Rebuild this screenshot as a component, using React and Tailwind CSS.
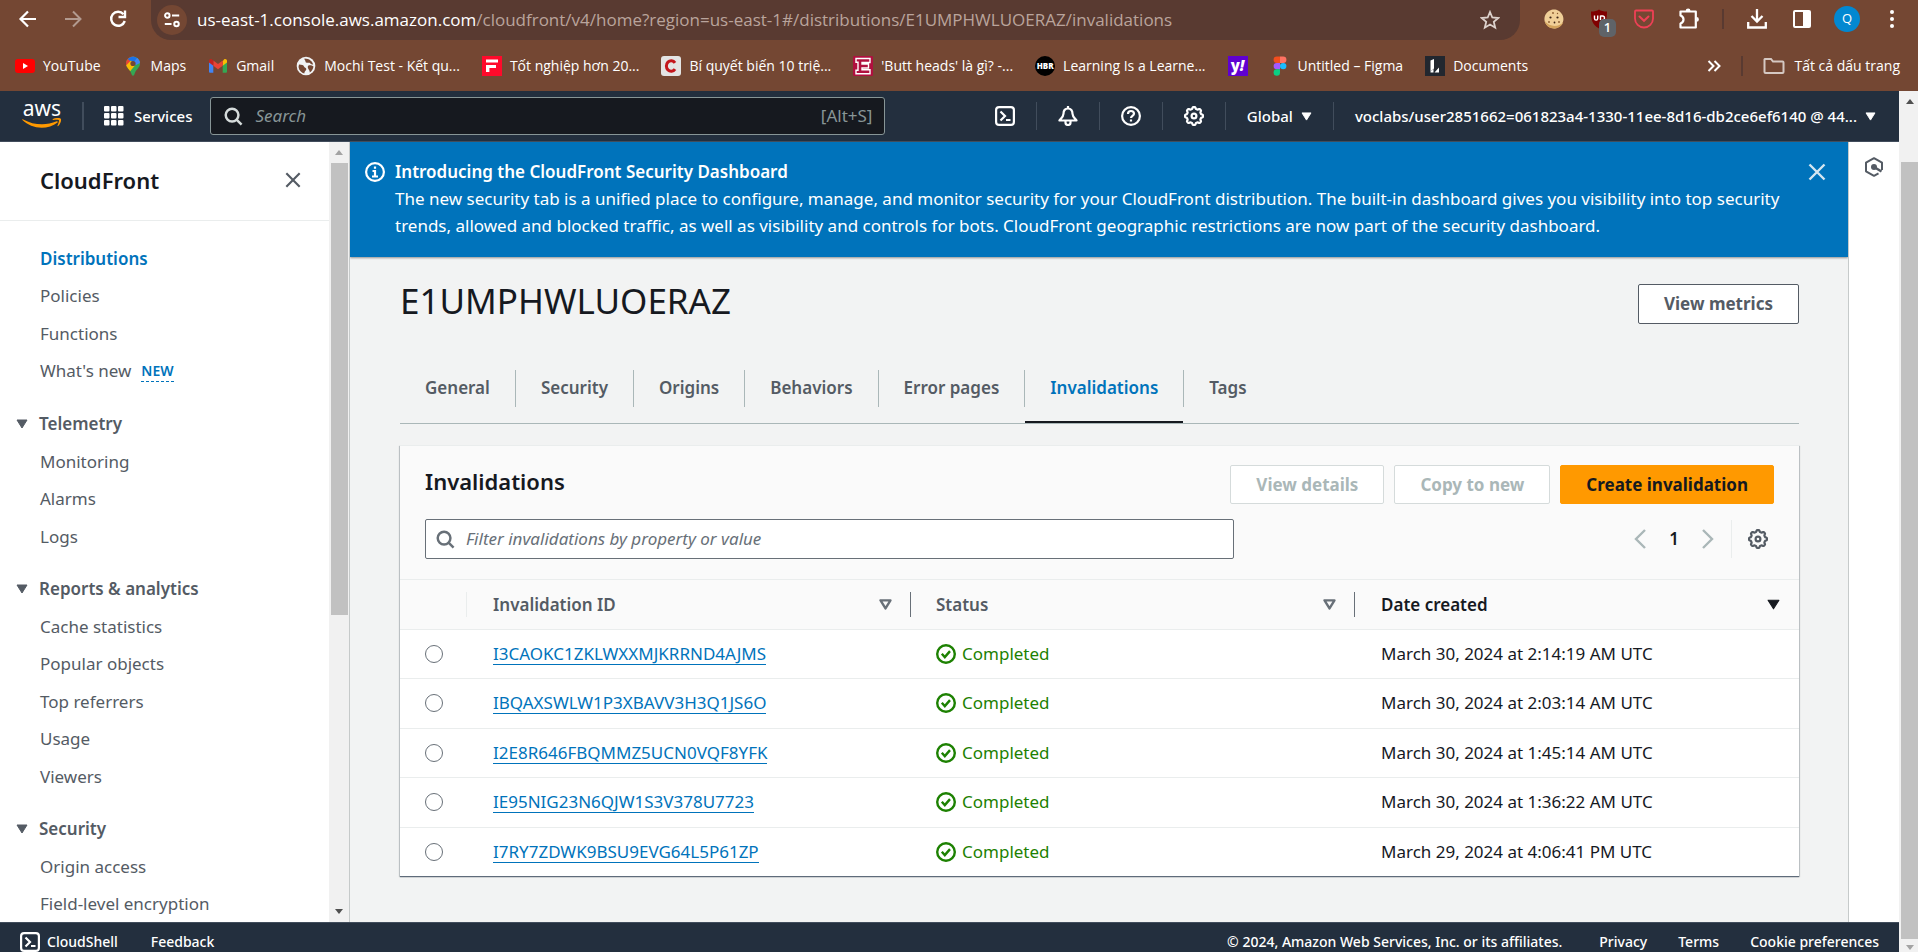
import React from "react";

const ember = "font-['Noto_Sans','Open_Sans',sans-serif]";
const segoe = "font-['Open_Sans','Noto_Sans',sans-serif]";

/* ---------- drawings ---------- */

function gearPath(cx, cy, r, depth, teeth) {
  const pts = [];
  for (let i = 0; i <= 160; i++) {
    const a = (i / 160) * Math.PI * 2;
    const wave = Math.tanh(2.2 * Math.cos(teeth * a));
    const rr = r + depth * wave;
    pts.push(`${(cx + rr * Math.cos(a)).toFixed(2)} ${(cy + rr * Math.sin(a)).toFixed(2)}`);
  }
  return `M${pts.join("L")}Z`;
}

const Gear = ({ className }) => (
  <svg viewBox="0 0 20 20" className={className} fill="none" stroke="currentColor" strokeWidth="2.200" strokeLinejoin="round" aria-hidden="true">
    <path d={gearPath(10, 10, 8.1, 0.9, 8)} />
    <circle cx="10" cy="10" r="2.4" />
  </svg>
);

const Terminal = ({ className }) => (
  <svg viewBox="0 0 20 20" className={className} fill="none" stroke="currentColor" strokeWidth="2.200" aria-hidden="true">
    <rect x="1.100" y="1.100" width="17.800" height="17.800" rx="3" />
    <path d="M5.500 5.500 10 10l-4.500 4.500M11 14h4.500" />
  </svg>
);

const Bell = () => (
  <svg viewBox="0 0 20 20" className="size-5" fill="none" stroke="currentColor" strokeWidth="2.200" strokeLinejoin="round" aria-hidden="true">
    <path d="M10 0v3M10 2.500c-3 0-4.500 2.300-4.500 5.200C5.500 10.500 3 12.500 1.500 14.500h17C17 12.500 14.500 10.500 14.500 7.700c0-2.900-1.500-5.200-4.500-5.200Z" />
    <path d="M7.500 15v1.500a2.500 2.500 0 0 0 5 0V15" />
  </svg>
);

const Help = () => (
  <svg viewBox="0 0 20 20" className="size-5" fill="none" stroke="currentColor" strokeWidth="2.200" aria-hidden="true">
    <circle cx="10" cy="10" r="8.900" />
    <path d="M7 8c0-1.900 1.300-3 3-3s3 1.100 3 2.700c0 2.100-3 2.300-3 4.300" />
    <path d="M10 13.500v2" />
  </svg>
);

const Info = () => (
  <svg viewBox="0 0 20 20" className="size-5" fill="none" stroke="currentColor" strokeWidth="2.200" aria-hidden="true">
    <circle cx="10" cy="10" r="8.900" />
    <path d="M10 4.500v2.200M7.500 9H10v5M7 14.500h6" />
  </svg>
);

const Magnifier = ({ className }) => (
  <svg viewBox="0 0 20 20" className={className} fill="none" stroke="currentColor" strokeWidth="2.600" aria-hidden="true">
    <circle cx="8.500" cy="8.500" r="6.700" />
    <path d="m13.200 13.200 5.300 5.300" />
  </svg>
);

const Cross = ({ className }) => (
  <svg viewBox="0 0 18 18" className={className} fill="none" stroke="currentColor" strokeWidth="2.400" aria-hidden="true">
    <path d="m1.500 1.500 15 15M16.500 1.500l-15 15" />
  </svg>
);

const Caret = ({ className }) => (
  <svg viewBox="0 0 12 10" className={className} fill="currentColor" stroke="currentColor" strokeLinejoin="round" aria-hidden="true">
    <path d="M1 1h10L6 9Z" />
  </svg>
);

const HollowCaret = () => (
  <svg viewBox="0 0 12 10" className="h-[11px] w-[13px] text-[#687078]" fill="none" stroke="currentColor" strokeWidth="2.200" strokeLinejoin="round" aria-hidden="true">
    <path d="M1.400 1.200h9.200L6 8.600Z" />
  </svg>
);

const Check = () => (
  <svg viewBox="0 0 20 20" className="size-5" fill="none" stroke="#1d8102" strokeWidth="2.400" aria-hidden="true">
    <circle cx="10" cy="10" r="8.800" />
    <path d="m5.800 9.800 3 3.300 5.200-6" />
  </svg>
);

const AwsLogo = () => (
  <span className="flex w-10 flex-col items-center">
    <span className="h-[15px] text-[21px] leading-[10px] font-normal text-white">aws</span>
    <svg viewBox="0 0 40 11" className="h-[11px] w-10" fill="#ff9900" aria-hidden="true">
      <path d="M.4 2.100c-.4-.6.1-1.100.8-.7C7 4.600 13.500 6.300 20 6.300c5 0 10-1.100 14.700-3 .9-.4 1.600.6.8 1.200C31.300 7.900 25.200 9.800 19.700 9.800 12.400 9.800 5.500 7 .4 2.100Z" />
      <path d="M31 2c-.5 0-.6-.6-.1-.9C33.600-.5 38-.2 38.800.8c.9 1.200-.4 5.200-2.600 7.200-.5.400-.9.100-.700-.400.700-1.700 1.900-4.700 1.300-5.500C36.200 1.300 33 1.700 31 2Z" />
    </svg>
  </span>
);

const Hexagon = () => (
  <svg viewBox="0 0 20 20" className="size-5 text-[#545b64]" fill="none" stroke="currentColor" strokeWidth="2" strokeLinejoin="round" aria-hidden="true">
    <path d="M18 13V5.700L10 1.200 2 5.700v8.600l8 4.500 4.500-2.500" />
    <path d="m10 10 7.500 4.500" strokeWidth="2.600" />
    <circle cx="10" cy="10" r="3" fill="currentColor" stroke="none" />
  </svg>
);

/* ---------- browser frame ---------- */

const bookmarks = [
  {
    text: "YouTube",
    icon: (
      <svg viewBox="0 0 20 20" className="size-5">
        <rect y="3" width="20" height="14" rx="3" fill="#ff0000" />
        <path d="m8 7 5 3-5 3Z" fill="#fff" />
      </svg>
    ),
  },
  {
    text: "Maps",
    icon: (
      <svg viewBox="0 0 20 20" className="size-5">
        <defs>
          <clipPath id="pin">
            <path d="M10 0.500a7 7 0 0 1 7 7c0 4-3.700 5.800-5.200 9.700-.5 1.300-.8 2.500-1.800 2.500s-1.300-1.200-1.800-2.500C6.700 13.300 3 11.500 3 7.500a7 7 0 0 1 7-7Z" />
          </clipPath>
        </defs>
        <g clipPath="url(#pin)">
          <rect width="20" height="20" fill="#34a853" />
          <path d="M0 0h12L3 11H0Z" fill="#ea4335" />
          <path d="M4.500 2.800 10 7.500 14.500 2 10 0Z" fill="#1a73e8" />
          <path d="m14.500 1.500-5 6L13 9l6-3Z" fill="#4285f4" />
          <path d="m2 10.500 6-6 4 5-6 7Z" fill="#fbbc04" />
        </g>
        <circle cx="10" cy="7.500" r="2.600" fill="#744733" />
      </svg>
    ),
  },
  {
    text: "Gmail",
    icon: (
      <svg viewBox="0 0 20 20" className="size-5">
        <path d="M1 5v10.500c0 .8.500 1.300 1.300 1.300h3V8Z" fill="#4285f4" />
        <path d="M19 5v10.500c0 .8-.5 1.300-1.300 1.300h-3V8Z" fill="#34a853" />
        <path d="M14.700 5.200V9.700L19 6.500V5c0-1.600-1.700-2.400-3-1.500Z" fill="#fbbc04" />
        <path d="M5.300 9.700V4.500L10 8l4.700-3.500v5.200L10 13.200Z" fill="#ea4335" />
        <path d="M1 5v1.500l4.300 3.200V4.500L4 3.500C2.700 2.600 1 3.400 1 5Z" fill="#c5221f" />
      </svg>
    ),
  },
  {
    text: "Mochi Test - Kết qu...",
    icon: (
      <svg viewBox="0 0 20 20" className="size-5">
        <circle cx="10" cy="10" r="9.300" fill="#f1f3f4" />
        <path d="M3 8.500c3 .2 4.500.5 5 2 .4 1.300 2.300 1 2.300 2.500 0 1.700-1.600 1.500-2 4.500C5.500 16.900 3 14.500 2.500 11ZM8.500 2.500c-.4 1.700 1 1.500 1 3 0 1.600 2.200 1.200 3.500 1.200 1.500 0 1.300 1.800 4.200 1.800-.7-3-3.700-6-8.700-6ZM12.500 9.500c1.500-.8 3.500-.2 5 1-.3 2.500-1.800 4.800-3.800 6 .1-1.800-.6-2.300-1.400-3.700-.6-1.100-.8-2.700.2-3.300Z" fill="#744733" />
      </svg>
    ),
  },
  {
    text: "Tốt nghiệp hơn 20...",
    icon: (
      <svg viewBox="0 0 20 20" className="size-5">
        <rect width="20" height="20" fill="#ff0a2b" />
        <path d="M4 5h12M4 10.500h10" stroke="#fff" strokeWidth="3" />
        <path d="M5.700 9v7" stroke="#fff" strokeWidth="3.400" />
      </svg>
    ),
  },
  {
    text: "Bí quyết biến 10 triệ...",
    icon: (
      <svg viewBox="0 0 20 20" className="size-5">
        <rect width="20" height="20" rx="3" fill="#e4e4e4" />
        <path d="M14 6.800A4.800 5.300 0 1 0 14 13.200" fill="none" stroke="#c4161c" strokeWidth="3" />
      </svg>
    ),
  },
  {
    text: "'Butt heads' là gì? -...",
    icon: (
      <svg viewBox="0 0 20 20" className="size-5">
        <rect width="20" height="20" rx="1" fill="#b0103f" />
        <path d="M3 2.500h14v4H9V8h6.500v4H9v1.700h8v4H3v-3.500h2v-8H3Z" fill="none" stroke="#fff" strokeWidth="1.400" />
      </svg>
    ),
  },
  {
    text: "Learning Is a Learne...",
    icon: (
      <span className="flex size-5 items-center justify-center rounded-full bg-black text-[8px] leading-none font-extrabold text-white">HBR</span>
    ),
  },
  {
    text: "",
    label: "Yahoo",
    icon: (
      <span className="flex size-5 items-center justify-center bg-[#5f01d1] text-[15px] leading-none font-extrabold text-white">
        y<span className="italic">!</span>
      </span>
    ),
  },
  {
    text: "Untitled – Figma",
    icon: (
      <svg viewBox="0 0 20 20" className="size-5">
        <path d="M10 .5H6.800a3.200 3.200 0 0 0 0 6.400H10Z" fill="#f24e1e" />
        <path d="M10 .5h3.200a3.200 3.200 0 0 1 0 6.400H10Z" fill="#ff7262" />
        <path d="M10 6.900H6.800a3.200 3.200 0 0 0 0 6.400H10Z" fill="#a259ff" />
        <circle cx="13.200" cy="10.100" r="3.200" fill="#1abcfe" />
        <path d="M10 13.300H6.800a3.200 3.200 0 1 0 3.200 3.200Z" fill="#0acf83" />
      </svg>
    ),
  },
  {
    text: "Documents",
    icon: (
      <svg viewBox="0 0 20 20" className="size-5">
        <rect width="20" height="20" fill="#22272f" />
        <path d="M5.500 4.500 9 3v9.500l-3.500 3ZM9.500 16.500l4.500-5v5Z" fill="#fff" />
        <path d="M5.500 16.500v-1l3-2.500v3.500Z" fill="#fff" />
      </svg>
    ),
  },
];

const chromeIcon = "flex size-[30px] shrink-0 items-center justify-center text-white";

function BrowserBar() {
  return (
    <header className={`h-[91px] shrink-0 bg-[#744733] text-white ${segoe}`}>
      <div className="flex h-10 items-start pr-[11px] pl-[13px]">
        <div className="flex h-[38px] items-center gap-[15px]">
          <button aria-label="Back" className={chromeIcon}>
            <svg viewBox="0 0 20 20" className="size-5" fill="none" stroke="currentColor" strokeWidth="2.200"><path d="M18 10H3M10 2.500 2.500 10l7.500 7.500" /></svg>
          </button>
          <button aria-label="Forward" className={`${chromeIcon} opacity-45`}>
            <svg viewBox="0 0 20 20" className="size-5" fill="none" stroke="currentColor" strokeWidth="2"><path d="M2 10h15M10 2.500l7.500 7.500-7.500 7.500" /></svg>
          </button>
          <button aria-label="Reload" className={chromeIcon}>
            <svg viewBox="0 0 20 20" className="size-5" fill="none" stroke="currentColor" strokeWidth="2.400"><path d="M16.800 12A7 7 0 1 1 15.500 5.200" /><path d="M17 1.500V8h-6.500" /></svg>
          </button>
        </div>
        <div className="ml-[18px] flex h-10 min-w-0 flex-1 items-center rounded-b-[20px] bg-[#593a31] pr-4 pl-[6px]">
          <button aria-label="Site information" className="flex size-[30px] shrink-0 items-center justify-center rounded-full bg-[#744733]">
            <svg viewBox="0 0 20 20" className="size-[18px]" fill="none" stroke="currentColor" strokeWidth="2.200"><circle cx="4.800" cy="5" r="2.500" /><path d="M10 5h8M2 14.500h7.500" /><circle cx="15" cy="14.500" r="2.500" /></svg>
          </button>
          <div
            role="textbox"
            aria-label="Address"
            contentEditable
            suppressContentEditableWarning
            className="ml-[10px] flex-1 truncate text-[17px] leading-6 text-[#b9a49c] outline-none"
          >
            <span className="text-white">us-east-1.console.aws.amazon.com</span>/cloudfront/v4/home?region=us-east-1#/distributions/E1UMPHWLUOERAZ/invalidations
          </div>
          <button aria-label="Bookmark this page" className="flex size-7 items-center justify-center">
            <svg viewBox="0 0 20 20" className="size-5" fill="none" stroke="#ddd2cd" strokeWidth="1.800"><path d="m10 2 2.300 5.500 6 .5-4.500 3.900 1.400 5.800L10 14.600l-5.200 3.100 1.400-5.800L1.700 8l6-.5Z" /></svg>
          </button>
        </div>
        <div className="ml-[19px] flex h-[38px] items-center gap-[15px]">
          <button aria-label="Cookie editor" className={chromeIcon}>
            <svg viewBox="0 0 20 20" className="size-5">
              <path d="M10 .5c2 0 3 .5 4.500 1.300s3.400 2.700 4.100 4.500c.5 1.400 1 3.100.8 4.600-.3 2-1.400 4.500-2.800 5.900s-3.900 2.600-5.900 2.700c-2 .1-4.500-.5-6.100-1.700S1.200 14.500.7 12.500C.2 10.300.4 7.800 1.300 6s2.500-3.200 4.100-4.200S8.300.5 10 .5Z" fill="#f0cf98" />
              <path d="M.8 12c.8 4.400 4.500 7.500 9.200 7.500 4.400 0 8.100-2.700 9.200-6.600-2 2.900-5.200 4-8.700 4S3 15.200.8 12Z" fill="#d3a35c" />
              <g fill="#3d2416"><circle cx="6.500" cy="8.500" r="1.100" /><circle cx="13.500" cy="8.500" r="1.100" /><circle cx="10.500" cy="13.500" r=".9" /></g>
              <g fill="#8a5a2e"><circle cx="9" cy="4" r=".9" /><circle cx="15" cy="13" r=".9" /><circle cx="5" cy="13" r=".9" /><circle cx="13.500" cy="4.500" r=".7" /></g>
            </svg>
          </button>
          <button aria-label="Ad blocker, 1 blocked" className={`relative ${chromeIcon}`}>
            <svg viewBox="0 0 20 20" className="size-5"><path d="M10 0.500c2 1.500 4.500 2 8 2 0 8-1 13-8 17-7-4-8-9-8-17 3.500 0 6-.5 8-2Z" fill="#800000" /><path d="M5.500 6.500v3a1.600 1.600 0 0 0 3.200 0v-3M11.500 6.500v4.500M11.500 7h2a1.800 1.800 0 0 1 0 4" fill="none" stroke="#fff" strokeWidth="1.400" /></svg>
            <span className="absolute top-[15px] left-[15px] flex h-[18px] w-[17px] items-center justify-center rounded-[5px] bg-[#5f6368] text-[13px] font-semibold">1</span>
          </button>
          <button aria-label="Save to Pocket" className={chromeIcon}>
            <svg viewBox="0 0 20 20" className="size-5" fill="none" stroke="#ef4056" strokeWidth="1.800"><path d="M2 1.500h16c.6 0 1 .4 1 1V9.500a9 9 0 0 1-18 0V2.500c0-.6.4-1 1-1Z" /><path d="m5.500 7.500 4.500 4.300 4.500-4.300" strokeWidth="2" strokeLinecap="round" /></svg>
          </button>
          <button aria-label="Extensions" className={chromeIcon}>
            <svg viewBox="0 0 22 22" className="size-[22px]" fill="none" stroke="currentColor" strokeWidth="2.200" strokeLinejoin="round">
              <path d="M2.500 3.500h15.300v16H2.500v-4c1.900-.7 3-2.100 3-4s-1.100-3.300-3-4Z" />
              <path d="M7.700 3a2.400 2.400 0 0 1 4.800 0ZM18.500 9a2.400 2.400 0 0 1 0 4.800Z" fill="currentColor" stroke="none" />
            </svg>
          </button>
          <span className="mx-[3px] h-5 w-[2px] bg-[#593a31]" />
          <button aria-label="Downloads" className={chromeIcon}>
            <svg viewBox="0 0 20 20" className="size-5" fill="none" stroke="currentColor" strokeWidth="2.300"><path d="M10 0v12.500M4.500 7l5.500 5.500L15.500 7M1.200 13v5.500h17.600V13" /></svg>
          </button>
          <button aria-label="Side panel" className={chromeIcon}>
            <svg viewBox="0 0 20 20" className="size-5"><rect x="2" y="2" width="16" height="16" rx="1" fill="none" stroke="#fff" strokeWidth="2" /><path d="M11 2h7v16h-7Z" fill="#fff" /></svg>
          </button>
          <button aria-label="Profile" className="mx-[2px] flex size-[26px] items-center justify-center rounded-full bg-[#0288d1] text-[13px]">Q</button>
          <button aria-label="Browser menu" className={chromeIcon}>
            <svg viewBox="0 0 20 20" className="size-5" fill="currentColor"><circle cx="10" cy="3" r="2" /><circle cx="10" cy="10" r="2" /><circle cx="10" cy="17" r="2" /></svg>
          </button>
        </div>
      </div>
      <nav aria-label="Bookmarks" className="flex h-[51px] items-center pr-[18px] pl-[15px] text-sm">
        <ul className="flex min-w-0 flex-1 items-center gap-[22px]">
          {bookmarks.map((b) => (
            <li key={b.text || b.label}>
              <a href="#" aria-label={b.text || b.label} className="flex items-center gap-2 whitespace-nowrap">
                {b.icon}
                {b.text && <span>{b.text}</span>}
              </a>
            </li>
          ))}
        </ul>
        <button aria-label="More bookmarks">
          <svg viewBox="0 0 14 12" className="h-3 w-[14px]" fill="none" stroke="currentColor" strokeWidth="2"><path d="m1.500 1 5 5-5 5M7.500 1l5 5-5 5" /></svg>
        </button>
        <span className="mx-5 h-5 w-[2px] bg-[#593a31]" />
        <a href="#" className="flex items-center gap-[10px] whitespace-nowrap">
          <svg viewBox="0 0 22 18" className="h-[18px] w-[22px]" fill="none" stroke="#d5c8c2" strokeWidth="2"><path d="M2 2h6l2 2.500h9.500c.6 0 1 .4 1 1V15c0 .6-.4 1-1 1h-17c-.6 0-1-.4-1-1V2.500Z" /></svg>
          <span>Tất cả dấu trang</span>
        </a>
      </nav>
    </header>
  );
}

/* ---------- console ---------- */

const Divider = () => <span className="mx-[21px] h-7 w-px shrink-0 bg-[#414d5c]" />;

function TopNav() {
  return (
    <nav aria-label="Console" className="flex h-[51px] shrink-0 items-center border-b border-[#414d5c] bg-[#232f3e] text-[15px] font-medium text-white">
      <a href="#" aria-label="AWS home" className="ml-[22px]"><AwsLogo /></a>
      <span className="ml-5 h-7 w-[2px] bg-[#414d5c]" />
      <button className="ml-5 flex items-center gap-[10px]">
        <svg viewBox="0 0 20 20" className="size-5" fill="currentColor" aria-hidden="true">
          {[0, 7, 14].map((y) => [0, 7, 14].map((x) => <rect key={`${x}-${y}`} x={x} y={y} width="5.500" height="5.500" rx="1" />))}
        </svg>
        Services
      </button>
      <label className="ml-[18px] flex h-[38px] w-[675px] shrink items-center rounded-[3px] border border-[#879596] bg-[#16191f] pr-3 pl-[13px] text-[17px] font-normal">
        <Magnifier className="size-[19px] text-[#d5dbdb]" />
        <input aria-label="Search" placeholder="Search" className="ml-3 min-w-0 flex-1 bg-transparent italic outline-none placeholder:text-[#879596]" />
        <span className="text-[#879596]">[Alt+S]</span>
      </label>
      <div className="flex flex-1 items-center justify-end pr-[23px]">
        <button aria-label="CloudShell"><Terminal className="size-5" /></button>
        <Divider />
        <button aria-label="Notifications"><Bell /></button>
        <Divider />
        <button aria-label="Help"><Help /></button>
        <Divider />
        <button aria-label="Settings"><Gear className="size-5" /></button>
        <Divider />
        <button className="flex items-center gap-2">Global <Caret className="h-[9px] w-[11px]" /></button>
        <Divider />
        <button className="flex items-center gap-2 whitespace-nowrap">
          voclabs/user2851662=061823a4-1330-11ee-8d16-db2ce6ef6140 @ 44... <Caret className="h-[9px] w-[11px]" />
        </button>
      </div>
    </nav>
  );
}

const sections = [
  { title: "Telemetry", items: ["Monitoring", "Alarms", "Logs"] },
  { title: "Reports & analytics", items: ["Cache statistics", "Popular objects", "Top referrers", "Usage", "Viewers"] },
  { title: "Security", items: ["Origin access", "Field-level encryption"] },
];

const linkRow = "flex items-center odd:h-[37px] even:h-[38px]";

function Sidebar() {
  return (
    <aside className="flex w-[350px] shrink-0 border-r border-[#c6caca] bg-white text-[#545b64]">
      <div className="flex-1 overflow-hidden">
        <div className="flex h-[79px] items-center justify-between border-b border-[#eaeded] pr-7 pb-[2px] pl-10">
          <h2 className="text-[22px] font-semibold text-[#16191f]">CloudFront</h2>
          <button aria-label="Close navigation"><Cross className="size-4" /></button>
        </div>
        <ul className="pt-[19px] pl-10">
          <li className={linkRow}><a href="#" className="font-semibold text-[#0073bb]">Distributions</a></li>
          <li className={linkRow}><a href="#">Policies</a></li>
          <li className={linkRow}><a href="#">Functions</a></li>
          <li className={linkRow}>
            <a href="#">What's new</a>
            <button className="ml-[10px] border-b border-dashed border-[#0073bb] text-sm leading-5 font-semibold text-[#0073bb]">NEW</button>
          </li>
        </ul>
        {sections.map((s) => (
          <section key={s.title} className="mt-[15px]">
            <h3 className="font-semibold">
              <button className="flex h-[38px] items-center gap-[11px] pl-4">
                <Caret className="h-[10px] w-3" />
                {s.title}
              </button>
            </h3>
            <ul className="pl-10">
              {s.items.map((t) => (
                <li key={t} className={linkRow}><a href="#">{t}</a></li>
              ))}
            </ul>
          </section>
        ))}
      </div>
      <div className="flex w-5 shrink-0 flex-col items-center bg-[#f1f1f1]" aria-hidden="true">
        <span className="flex h-[21px] items-center"><svg viewBox="0 0 8 5" className="h-[5px] w-2"><path d="M4 0l4 5H0Z" fill="#a3a3a3" /></svg></span>
        <span className="w-[17px] flex-[452] bg-[#c1c1c1]" />
        <span className="flex-[286]" />
        <span className="flex h-[21px] items-center"><svg viewBox="0 0 8 5" className="h-[5px] w-2"><path d="M0 0h8L4 5Z" fill="#505050" /></svg></span>
      </div>
    </aside>
  );
}

const tabs = ["General", "Security", "Origins", "Behaviors", "Error pages", "Invalidations", "Tags"];

const rows = [
  ["I3CAOKC1ZKLWXXMJKRRND4AJMS", "March 30, 2024 at 2:14:19 AM UTC"],
  ["IBQAXSWLW1P3XBAVV3H3Q1JS6O", "March 30, 2024 at 2:03:14 AM UTC"],
  ["I2E8R646FBQMMZ5UCN0VQF8YFK", "March 30, 2024 at 1:45:14 AM UTC"],
  ["IE95NIG23N6QJW1S3V378U7723", "March 30, 2024 at 1:36:22 AM UTC"],
  ["I7RY7ZDWK9BSU9EVG64L5P61ZP", "March 29, 2024 at 4:06:41 PM UTC"],
];

function Banner() {
  return (
    <div role="status" className="flex h-[115px] items-start bg-[#0073bb] pt-4 pr-[22px] pl-[15px] text-white shadow-[0_1px_2px_#00000066]">
      <span className="mt-1"><Info /></span>
      <div className="ml-[10px] min-w-0 flex-1 pr-2 leading-[27px]">
        <p className="font-semibold">Introducing the CloudFront Security Dashboard</p>
        <p>
          The new security tab is a unified place to configure, manage, and monitor security for your CloudFront distribution. The built-in dashboard gives you visibility into top security trends, allowed and blocked traffic, as well as visibility and controls for bots. CloudFront geographic restrictions are now part of the security dashboard.
        </p>
      </div>
      <button aria-label="Dismiss" className="mt-[5px] text-[#d5e6f1]"><Cross className="size-[18px]" /></button>
    </div>
  );
}

const btn = "flex items-center justify-center rounded-[2px] border px-[25px] font-bold whitespace-nowrap";

function InvalidationsCard() {
  return (
    <section className="mt-[21px] border-t border-[#eaeded] bg-white shadow-[0_1px_1px_0_#5f6b7a,1px_1px_1px_0_#001c2426,-1px_1px_1px_0_#001c2426]">
      <div className="border-b border-[#eaeded] bg-[#fafafa] px-[25px] pt-[19px] pb-5">
        <div className="flex items-start justify-between">
          <h2 className="mt-[2px] text-[22px] leading-7 font-semibold text-[#16191f]">Invalidations</h2>
          <div className="flex gap-[10px]">
            <button disabled className={`${btn} h-[39px] border-[#d5dbdb] bg-white text-[#aab7b8]`}>View details</button>
            <button disabled className={`${btn} h-[39px] border-[#d5dbdb] bg-white text-[#aab7b8]`}>Copy to new</button>
            <button className={`${btn} h-[39px] border-[#ff9900] bg-[#ff9900] text-[#16191f]`}>Create invalidation</button>
          </div>
        </div>
        <div className="mt-[15px] flex items-center justify-between">
          <label className="flex h-10 w-3/5 items-center rounded-[2px] border border-[#687078] bg-white pl-[10px]">
            <Magnifier className="size-[19px] text-[#687078]" />
            <input aria-label="Filter invalidations" placeholder="Filter invalidations by property or value" className="ml-[11px] min-w-0 flex-1 bg-transparent italic outline-none placeholder:text-[#687078]" />
          </label>
          <div className="flex items-center">
            <button aria-label="Previous page" className="text-[#aab7b8]">
              <svg viewBox="0 0 12 20" className="h-5 w-3" fill="none" stroke="currentColor" strokeWidth="2.400"><path d="M11 1 2 10l9 9" /></svg>
            </button>
            <button className="w-14 text-center font-semibold text-[#16191f]">1</button>
            <button aria-label="Next page" className="text-[#aab7b8]">
              <svg viewBox="0 0 12 20" className="h-5 w-3" fill="none" stroke="currentColor" strokeWidth="2.400"><path d="m1 1 9 9-9 9" /></svg>
            </button>
            <span className="mr-4 ml-[17px] h-[38px] w-px bg-[#eaeded]" />
            <button aria-label="Table preferences" className="mr-[6px] text-[#545b64]"><Gear className="size-5" /></button>
          </div>
        </div>
      </div>
      <table className="w-full table-fixed border-collapse text-left">
        <colgroup>
          <col className="w-[67px]" />
          <col />
          <col />
          <col />
        </colgroup>
        <thead className="bg-[#fafafa] text-[#545b64]">
          <tr className="h-[49px] border-b border-[#eaeded]">
            <th className="p-0"><span className="flex h-[25px] border-r border-[#eaeded]" /></th>
            <th className="p-0 font-semibold">
              <div className="flex h-[25px] items-center justify-between border-r border-[#687078] pr-[18px] pl-[26px]">Invalidation ID <HollowCaret /></div>
            </th>
            <th className="p-0 font-semibold">
              <div className="flex h-[25px] items-center justify-between border-r border-[#687078] pr-[18px] pl-[25px]">Status <HollowCaret /></div>
            </th>
            <th className="p-0 font-semibold">
              <div className="flex h-[25px] items-center justify-between pr-[19px] pl-[26px] text-[#16191f]">Date created <Caret className="h-[11px] w-[13px]" /></div>
            </th>
          </tr>
        </thead>
        <tbody className="text-[#16191f]">
          {rows.map(([id, date]) => (
            <tr key={id} className="border-b border-[#eaeded] last:border-b-0 odd:h-[49px] even:h-[50px]">
              <td className="p-0 pl-[25px]">
                <input type="radio" name="invalidation" aria-label={id} className="block size-[18px] appearance-none rounded-full border border-[#687078] bg-white" />
              </td>
              <td className="p-0 pl-[26px]"><a href="#" className="inline-block border-b border-[#0073bb] leading-[21px] text-[#0073bb]">{id}</a></td>
              <td className="p-0 pl-[25px]"><span className="flex items-center gap-[6px] text-[#1d8102]"><Check />Completed</span></td>
              <td className="p-0 pl-[26px]">{date}</td>
            </tr>
          ))}
        </tbody>
      </table>
    </section>
  );
}

function Content() {
  return (
    <main className="min-w-0 flex-1 overflow-hidden border-r border-[#c6caca] bg-[#f2f3f3]">
      <Banner />
      <div className="pt-[27px] pr-[49px] pl-[50px]">
        <div className="flex items-start justify-between">
          <h1 className="text-[35px] leading-[34px] text-[#16191f]">E1UMPHWLUOERAZ</h1>
          <button className={`${btn} h-10 border-[#545b64] bg-white text-[#545b64]`}>View metrics</button>
        </div>
        <div role="tablist" className="mt-[46px] flex h-[54px] items-start border-b border-[#aab7b8] font-semibold">
          {tabs.map((t) => (
            <div key={t} className="flex h-full items-start">
              <button
                role="tab"
                aria-selected={t === "Invalidations"}
                className={`h-[53px] border-b-2 px-[25px] pb-[15px] ${t === "Invalidations" ? "border-[#16191f] text-[#0073bb]" : "border-transparent text-[#545b64]"}`}
              >
                {t}
              </button>
              {t !== "Tags" && <span className="h-[37px] w-px bg-[#aab7b8]" />}
            </div>
          ))}
        </div>
        <InvalidationsCard />
      </div>
    </main>
  );
}

function Footer() {
  return (
    <footer className="flex h-[30px] shrink-0 items-start border-t border-[#414d5c] bg-[#232f3e] pr-5 pl-5 text-sm font-medium text-white">
      <div className="flex h-[38px] items-center">
        <button className="flex items-center gap-[7px]"><Terminal className="size-5" />CloudShell</button>
        <a href="#" className="ml-[33px]">Feedback</a>
      </div>
      <div className="ml-auto flex h-[38px] items-center">
        <span>© 2024, Amazon Web Services, Inc. or its affiliates.</span>
        <a href="#" className="ml-[37px]">Privacy</a>
        <a href="#" className="ml-[31px]">Terms</a>
        <a href="#" className="ml-[31px]">Cookie preferences</a>
      </div>
    </footer>
  );
}

export default function App() {
  return (
    <div className={`flex h-screen flex-col overflow-hidden bg-white ${ember}`}>
      <BrowserBar />
      <div className="flex min-h-0 flex-1">
        <div className="flex min-w-0 flex-1 flex-col text-[17px]">
          <TopNav />
          <div className="flex min-h-0 flex-1">
            <Sidebar />
            <Content />
            <aside aria-label="Tools" className="flex w-[50px] shrink-0 justify-center bg-white pt-[15px]">
              <button aria-label="Open assistant" className="h-5"><Hexagon /></button>
            </aside>
          </div>
          <Footer />
        </div>
        <div className="flex w-[19px] shrink-0 flex-col items-end bg-[#f1f1f1]" aria-hidden="true">
          <span className="flex h-[71px] w-[17px] justify-center pt-2"><svg viewBox="0 0 8 5" className="h-[5px] w-2"><path d="M4 0l4 5H0Z" fill="#505050" /></svg></span>
          <span className="w-[17px] flex-1 bg-[#c1c1c1]" />
          <span className="flex h-[13px] w-[17px] justify-center pt-[6px]"><svg viewBox="0 0 8 5" className="h-[5px] w-2"><path d="M0 0h8L4 5Z" fill="#a3a3a3" /></svg></span>
        </div>
      </div>
    </div>
  );
}
